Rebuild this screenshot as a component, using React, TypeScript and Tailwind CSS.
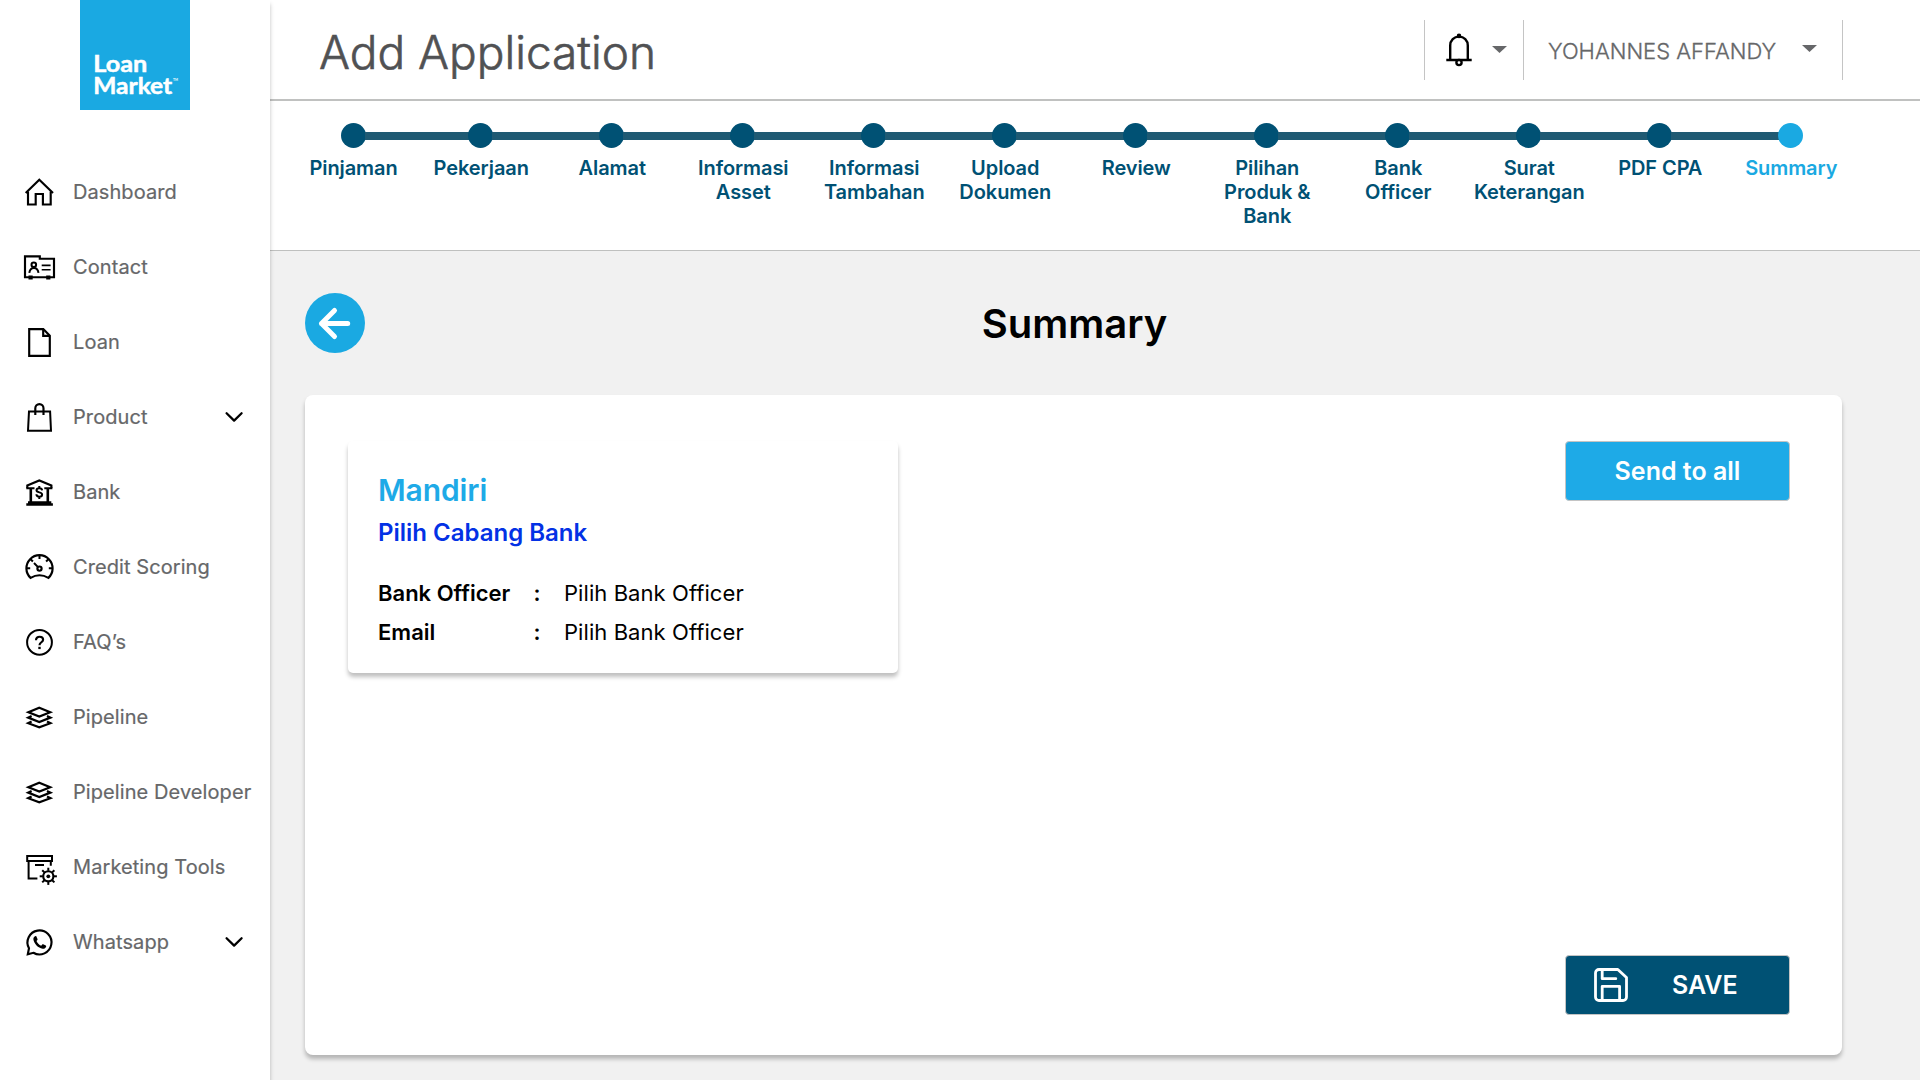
import type { ReactNode } from "react";

const Chevron = () => (
  <svg className="h-6 w-6" viewBox="0 0 24 24" fill="none" stroke="#000" strokeWidth="2.3" strokeLinecap="round" strokeLinejoin="round">
    <path d="M4.6 8.3 12.1 15.6 19.6 8.3" />
  </svg>
);

const Layers = () => (
  <g strokeWidth="2.2" strokeLinejoin="miter">
    <path d="M20.3 10.8 31.2 15.2 20.3 19.6 9.4 15.2Z" />
    <path d="M12.6 19 9.2 20.6 20.3 25 31.4 20.6 28 19" />
    <path d="M12.6 24.6 9.2 26.2 20.3 30.4 31.4 26.2 28 24.6" />
  </g>
);

const gearTeeth = [0, 45, 90, 135, 180, 225, 270, 315];

const icons: Record<string, ReactNode> = {
  home: (
    <>
      <path d="M6.7 21 20.3 7.8 34 21" />
      <path d="M9 19.5V32.5H16.7V22H23.9V32.5H31.7V19.5" />
    </>
  ),
  contact: (
    <>
      <path d="M6 9.3H20.8V11.7H35V30.2H6Z" />
      <path d="M9.5 28.5h4.2v4H9.5zM27.2 28.5h4.2v4h-4.2z" fill="#000" stroke="none" />
      <circle cx="14.8" cy="17.8" r="2.3" strokeWidth="2" />
      <path d="M10.3 25.9C10.8 22.4 12.6 21 14.9 21S19 22.4 19.5 25.9" strokeWidth="2" />
      <path d="M22.7 18.4H31.6M22.7 22.7H31.6" strokeWidth="1.6" />
    </>
  ),
  loan: (
    <>
      <path d="M10.2 7.1H24.3L30.8 13.8V33.8H10.2Z" />
      <path d="M24.2 7.1V13.8H31" />
    </>
  ),
  product: (
    <>
      <path d="M10 14.5H31.1L32 33.8H9Z" strokeWidth="2" />
      <path d="M16.3 18V11.2a4.1 4.1 0 0 1 8.2 0V18" />
    </>
  ),
  bank: (
    <>
      <path d="M8.3 16V13.4L20.3 8.5 32.4 13.4V16" />
      <path d="M7.3 16.3H15.5M25.3 16.3H33.4" strokeWidth="2" />
      <path d="M11.8 16V30M28.8 16V30" strokeWidth="2.6" />
      <path d="M9 29.3H32.3V31.3H33.9V33.7H7.3V31.3H9Z" fill="#000" stroke="none" />
      <path d="M23.1 18.4C23 16.8 21.8 16.2 20.3 16.2 18.7 16.2 17.5 17 17.5 18.3 17.5 21.2 23.1 19.6 23.1 22.5 23.1 23.9 21.8 24.7 20.3 24.7 18.6 24.7 17.5 23.8 17.4 22.3M20.3 14V16.4M20.3 24.5V27" strokeWidth="2" />
    </>
  ),
  scoring: (
    <>
      <path d="M11.6 30.9A13.1 13.1 0 1 1 29.4 30.9Q20.5 25.6 11.6 30.9Z" />
      <path d="M20.5 8V12M8 21.3H11.2M29.8 21.3H33M11.6 12.2 13.9 14.5M29.4 12.2 27.1 14.5M15 16 18.8 19.9" strokeWidth="2" />
      <circle cx="20.5" cy="21.6" r="2.1" />
    </>
  ),
  faq: (
    <>
      <circle cx="20.5" cy="20.3" r="12.4" strokeWidth="2" />
      <path d="M17 18.2C17 15.9 18.6 14.7 20.6 14.7S24.1 16 24.1 17.8C24.1 20.2 20.5 20.4 20.5 23.2" />
      <path d="M19.3 24.8h2.4v2.3h-2.4z" fill="#000" stroke="none" />
    </>
  ),
  layers: <Layers />,
  tools: (
    <>
      <path d="M8.2 9.1H33V13.9H8.2ZM9.6 14V31.4H18.4M31.8 14V18.8M16 18.1H25" strokeWidth="2" />
      <circle cx="29.3" cy="29.3" r="5.1" />
      <circle cx="29.3" cy="29.3" r="1.9" fill="#000" stroke="none" />
      {gearTeeth.map((a) => (
        <path key={a} d="M29.3 23.8V20.7" strokeWidth="2" transform={`rotate(${a} 29.3 29.3)`} />
      ))}
    </>
  ),
  whatsapp: (
    <>
      <path d="M8.8 32.2 10 26.3A12 12 0 1 1 14.4 30.8Z" />
      <path d="M16.6 14.1C15.2 14.5 14.2 16 14.4 17.6 15 21.8 19.2 26.2 23.6 26.8 25.2 27 26.7 26.1 27.1 24.8 27.3 24.2 27.2 23.9 26.8 23.6L24.2 22.3C23.8 22.1 23.5 22.2 23.2 22.5L22.2 23.7C20 22.8 18.4 21.1 17.5 19L18.4 17.9C18.6 17.6 18.6 17.3 18.5 17L17.4 14.5C17.2 14.1 17 14 16.6 14.1Z" fill="#000" stroke="none" />
    </>
  ),
};

const menu = [
  { label: "Dashboard", icon: "home" },
  { label: "Contact", icon: "contact" },
  { label: "Loan", icon: "loan" },
  { label: "Product", icon: "product", open: true },
  { label: "Bank", icon: "bank" },
  { label: "Credit Scoring", icon: "scoring" },
  { label: "FAQ’s", icon: "faq" },
  { label: "Pipeline", icon: "layers" },
  { label: "Pipeline Developer", icon: "layers" },
  { label: "Marketing Tools", icon: "tools" },
  { label: "Whatsapp", icon: "whatsapp", open: true },
];

const steps = [
  ["Pinjaman"],
  ["Pekerjaan"],
  ["Alamat"],
  ["Informasi", "Asset"],
  ["Informasi", "Tambahan"],
  ["Upload", "Dokumen"],
  ["Review"],
  ["Pilihan", "Produk &", "Bank"],
  ["Bank", "Officer"],
  ["Surat", "Keterangan"],
  ["PDF CPA"],
  ["Summary"],
];

function Sidebar() {
  return (
    <aside className="relative z-10 h-full w-[270px] shrink-0 bg-white shadow-[0_4px_4px_rgba(0,0,0,0.25)]">
      <div className="ml-20 h-[110px] w-[110px] bg-[#1aa9e2]">
        <svg className="h-full w-full" viewBox="0 0 110 110" fill="#fff" fontFamily="Lato, sans-serif" fontWeight="700" fontSize="23.5">
          <text x="13.2" y="72.2" textLength="54" lengthAdjust="spacingAndGlyphs" stroke="#fff" strokeWidth="0.5">Loan</text>
          <text x="13.2" y="94" textLength="79" lengthAdjust="spacingAndGlyphs" stroke="#fff" strokeWidth="0.5">Market</text>
          <text x="93" y="80.5" fontSize="3.2">TM</text>
        </svg>
      </div>
      <nav className="mt-[44.5px]">
        {menu.map((m) => (
          <div key={m.label} className="flex h-[75px] items-center pl-[19px]">
            <svg className="h-10 w-10 shrink-0" viewBox="0 0 40 40" fill="none" stroke="#000" strokeWidth="2.15">
              {icons[m.icon]}
            </svg>
            <span className="ml-[14px] flex-1 text-xl tracking-[0.08px] whitespace-nowrap text-[#666769] [-webkit-text-stroke:0.2px_#666769]">{m.label}</span>
            {m.open && (
              <span className="mr-6">
                <Chevron />
              </span>
            )}
          </div>
        ))}
      </nav>
    </aside>
  );
}

const Caret = () => (
  <svg className="h-[7px] w-[15px]" viewBox="0 0 15 7" fill="#666769">
    <path d="M0 0H15L7.5 7Z" />
  </svg>
);

function Header() {
  return (
    <header className="flex h-[101px] items-start justify-between border-b-2 border-[#c0c1c0] pr-[77px]">
      <h1 className="mt-[23px] ml-[49px] text-[46px] leading-[58px] font-light text-[#505153] [-webkit-text-stroke:0.6px_#505153]">Add Application</h1>
      <div className="mt-5 flex h-[60px] border-x border-[#c4c4c4]">
        <div className="flex w-[99px] border-r border-[#c4c4c4]">
          <svg className="mt-[13px] ml-[21px] h-[34px] w-[26px]" viewBox="0 0 26 34" fill="none" stroke="#000" strokeWidth="2.4">
            <path d="M4.2 27V12.6C4.2 7.2 8 3.6 13 3.6S21.8 7.2 21.8 12.6V27M0.3 27H25.7" />
            <circle cx="13" cy="2.9" r="2.3" fill="#000" stroke="none" />
            <circle cx="13" cy="29.5" r="2.6" />
          </svg>
          <div className="mt-[26px] ml-[20px]">
            <Caret />
          </div>
        </div>
        <div className="flex w-[318px]">
          <span className="mt-[15px] ml-[24px] w-[254px] text-[22px] leading-[32px] font-light text-[#666769] [-webkit-text-stroke:0.3px_#666769]">YOHANNES AFFANDY</span>
          <div className="mt-[25px]">
            <Caret />
          </div>
        </div>
      </div>
    </header>
  );
}

function Stepper() {
  return (
    <section className="flex h-[150px] border-b border-[#bfc0bf] pt-[22px] pl-[22px]">
      {steps.map((lines, i) => {
        const first = i === 0;
        const last = i === steps.length - 1;
        return (
          <div key={i} className={first ? "w-[123px]" : "w-[131px]"}>
            <div className="flex h-[25px] items-center">
              <div className={first ? "h-2 flex-1" : "h-2 flex-1 bg-[#1f5a73]"} />
              <div className={last ? "-mx-px h-[25px] w-[25px] rounded-full bg-[#1aa9e2]" : "-mx-px h-[25px] w-[25px] rounded-full bg-[#005174]"} />
              <div className={last ? "h-2 flex-1" : "h-2 flex-1 bg-[#1f5a73]"} />
            </div>
            <div
              className={
                last
                  ? "mt-2 pl-[1.5px] text-center text-xl leading-6 font-semibold tracking-[-0.08px] text-[#1aa9e2]"
                  : first
                    ? "mt-2 text-center text-xl leading-6 font-semibold tracking-[-0.08px] text-[#005174]"
                    : "mt-2 pl-[1.5px] text-center text-xl leading-6 font-semibold tracking-[-0.08px] text-[#005174]"
              }
            >
              {lines.map((l) => (
                <div key={l} className="whitespace-nowrap">{l}</div>
              ))}
            </div>
          </div>
        );
      })}
    </section>
  );
}

function BankCard() {
  return (
    <div className="h-[232px] w-[550px] rounded-[5px] bg-white pt-7 pl-[30px] shadow-[0_4px_4px_rgba(0,0,0,0.25)]">
      <h3 className="text-[30px] leading-[42px] font-semibold tracking-[-0.1px] text-[#1eaae7]">Mandiri</h3>
      <p className="mt-px text-2xl leading-[42px] font-semibold text-[#0331e5]">Pilih Cabang Bank</p>
      <div className="mt-5 grid grid-cols-[155.5px_30.5px_1fr] text-[22px] leading-[39px] text-black">
        <span className="font-semibold">Bank Officer</span>
        <span className="font-semibold">:</span>
        <span className="tracking-[0.07px]">Pilih Bank Officer</span>
        <span className="font-semibold">Email</span>
        <span className="font-semibold">:</span>
        <span className="tracking-[0.07px]">Pilih Bank Officer</span>
      </div>
    </div>
  );
}

export default function App() {
  return (
    <div className="flex h-[1080px] w-[1920px] overflow-hidden bg-[#f1f1f1] font-[Inter,sans-serif]">
      <Sidebar />
      <div className="flex flex-1 flex-col">
        <div className="bg-white">
          <Header />
          <Stepper />
        </div>
        <main className="pr-[78px] pl-[35px]">
          <div className="mt-[42px] grid h-[60px] grid-cols-[60px_1fr_60px] items-center">
            <button className="flex h-[60px] w-[60px] items-center justify-center rounded-full bg-[#1aa9e2]">
              <svg className="h-[60px] w-[60px]" viewBox="0 0 60 60" fill="none" stroke="#fff" strokeWidth="5" strokeLinecap="round" strokeLinejoin="round">
                <path d="M29.5 17.5 16.5 30.5 29.5 43.5M16.5 30.5H42.7" />
              </svg>
            </button>
            <h2 className="pt-[2px] pl-[2px] text-center text-[40px] leading-[48px] font-semibold text-black">Summary</h2>
          </div>
          <section className="mt-[42px] flex h-[660px] justify-between rounded-lg bg-white pt-[46px] pr-[52px] pb-10 pl-[43px] shadow-[0_4px_4px_rgba(0,0,0,0.25)]">
            <BankCard />
            <div className="flex flex-col justify-between">
              <button className="h-[60px] w-[225px] rounded-[4px] border border-[#c4c4c4] bg-[#1eaae7] pt-px text-[25px] font-semibold text-white">Send to all</button>
              <button className="flex h-[60px] w-[225px] items-center rounded-[4px] border border-[#c4c4c4] bg-[#005174] pl-7 text-[25px] font-semibold text-white">
                <svg className="h-[34px] w-[34px]" viewBox="0 0 34 34" fill="none" stroke="#fff" strokeWidth="2.8" strokeLinejoin="round" strokeLinecap="round">
                  <path d="M5 1.5H23.8L32.5 9.6V29A3.5 3.5 0 0 1 29 32.5H5A3.5 3.5 0 0 1 1.5 29V5A3.5 3.5 0 0 1 5 1.5Z" />
                  <path d="M8.2 2V10.7H21.8M8.2 32V18.4H25.6V32" />
                </svg>
                <span className="ml-[44px] pt-px">SAVE</span>
              </button>
            </div>
          </section>
        </main>
      </div>
    </div>
  );
}
